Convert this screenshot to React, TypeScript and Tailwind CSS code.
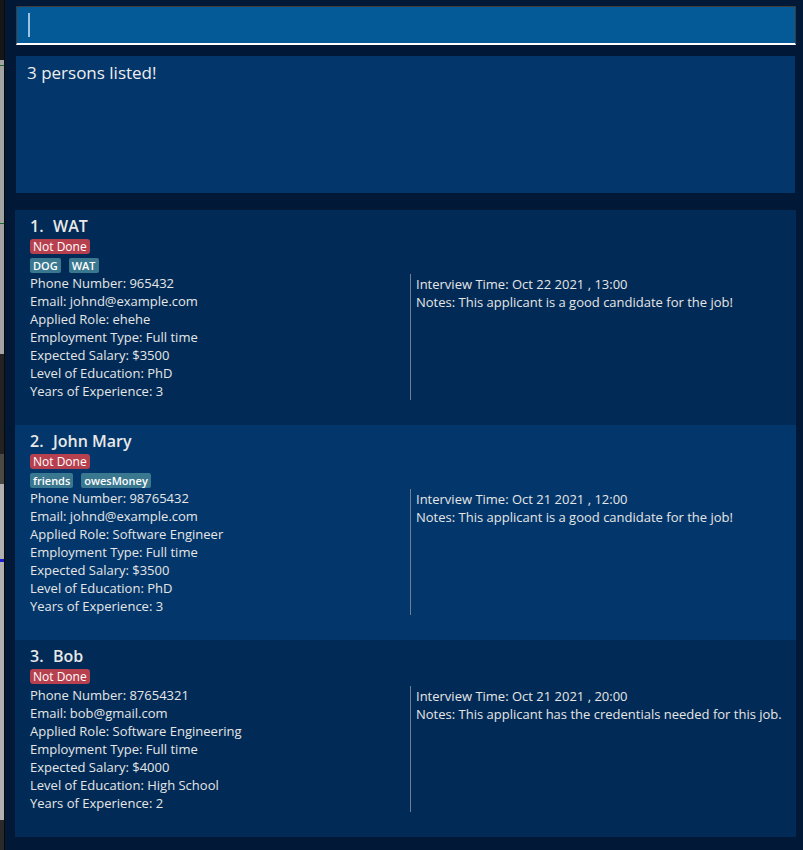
import React from "react";

type Person = {
  idx: number;
  name: string;
  tags: string[];
  phone: string;
  email: string;
  role: string;
  type: string;
  salary: string;
  edu: string;
  years: string;
  time: string;
  notes: string;
  bg: string;
};

const people: Person[] = [
  {
    idx: 1,
    name: "WAT",
    tags: ["DOG", "WAT"],
    phone: "965432",
    email: "johnd@example.com",
    role: "ehehe",
    type: "Full time",
    salary: "$3500",
    edu: "PhD",
    years: "3",
    time: "Oct 22 2021 , 13:00",
    notes: "This applicant is a good candidate for the job!",
    bg: "bg-[#012b56]",
  },
  {
    idx: 2,
    name: "John Mary",
    tags: ["friends", "owesMoney"],
    phone: "98765432",
    email: "johnd@example.com",
    role: "Software Engineer",
    type: "Full time",
    salary: "$3500",
    edu: "PhD",
    years: "3",
    time: "Oct 21 2021 , 12:00",
    notes: "This applicant is a good candidate for the job!",
    bg: "bg-[#03376b]",
  },
  {
    idx: 3,
    name: "Bob",
    tags: [],
    phone: "87654321",
    email: "bob@gmail.com",
    role: "Software Engineering",
    type: "Full time",
    salary: "$4000",
    edu: "High School",
    years: "2",
    time: "Oct 21 2021 , 20:00",
    notes: "This applicant has the credentials needed for this job.",
    bg: "bg-[#012b56]",
  },
];

function Card({ p }: { p: Person }) {
  const fields = [
    `Phone Number: ${p.phone}`,
    `Email: ${p.email}`,
    `Applied Role: ${p.role}`,
    `Employment Type: ${p.type}`,
    `Expected Salary: ${p.salary}`,
    `Level of Education: ${p.edu}`,
    `Years of Experience: ${p.years}`,
  ];
  return (
    <div className={`${p.bg} pl-[15px] pt-[5px] pb-[25px]`}>
      <div className="h-[22px] leading-[22px] text-[16px] font-semibold text-[#e8e8e8] flex">
        <span className="w-[23px]">{p.idx}.</span>
        <span>{p.name}</span>
      </div>
      <div className="mt-[2px] flex">
        <span className="h-[15px] leading-[15px] px-[3px] rounded-[3px] bg-[#b7404f] text-white text-[12px] font-medium">
          Not Done
        </span>
      </div>
      {p.tags.length > 0 && (
        <div className="mt-[4px] flex gap-[8px]">
          {p.tags.map((t) => (
            <span
              key={t}
              className="h-[15px] leading-[15px] px-[3px] rounded-[2px] bg-[#3a788f] text-white text-[11px] font-semibold"
            >
              {t}
            </span>
          ))}
        </div>
      )}
      <div className={`${p.tags.length > 0 ? "mt-[1px]" : "mt-[2px]"} flex`}>
        <div className="w-[380px] text-[13px] leading-[18px] text-[#e6e6e6]">
          {fields.map((f) => (
            <div key={f}>{f}</div>
          ))}
        </div>
        <div className="border-l border-[#6d7f91] pl-[5px] pt-[1px] text-[13px] leading-[18px] text-[#e6e6e6]">
          <div>Interview Time: {p.time}</div>
          <div>Notes: {p.notes}</div>
        </div>
      </div>
    </div>
  );
}

export default function App() {
  return (
    <div
      className="w-[803px] h-[850px] flex bg-[#011836] overflow-hidden"
      style={{ fontFamily: '"Open Sans", "Noto Sans", sans-serif' }}
    >
      <div className="w-[4px] flex flex-col">
        <div className="h-[60px] bg-[#161616]" />
        <div className="h-[5px] bg-[#a3a3a3]" />
        <div className="h-[1px] bg-[#1b6b2a]" />
        <div className="h-[157px] bg-[#a3a3a3]" />
        <div className="h-[1px] bg-[#1b6b2a]" />
        <div className="h-[130px] bg-[#a3a3a3]" />
        <div className="h-[100px] bg-[#222222]" />
        <div className="h-[30px] bg-[#4a4a45]" />
        <div className="h-[75px] bg-[#b0b0b0]" />
        <div className="h-[3px] bg-[#1a1ad0]" />
        <div className="flex-1 bg-[#b0b0b0]" />
        <div className="h-[30px] bg-[#2a2a2a]" />
      </div>
      <div className="w-[1px] bg-[#0a0a0a]" />
      <div className="flex-1 flex flex-col pl-[11px] pr-[7px] pt-[6px]">
        <div className="h-[39px] border-t border-l border-r border-[#3c3c3c] border-b-2 border-b-white bg-[#035a96] flex items-center pl-[11px]">
          <div className="w-[2px] h-[24px] bg-[#9cc3df]" />
        </div>
        <div className="mt-[11px] mr-[1px] h-[137px] bg-[#03366a] pl-[11px] pt-[5px] text-[17px] leading-[24px] text-[#eeeeee]">
          3 persons listed!
        </div>
        <div className="mt-[17px] -ml-[1px] flex flex-col">
          {people.map((p) => (
            <Card key={p.idx} p={p} />
          ))}
        </div>
      </div>
    </div>
  );
}
